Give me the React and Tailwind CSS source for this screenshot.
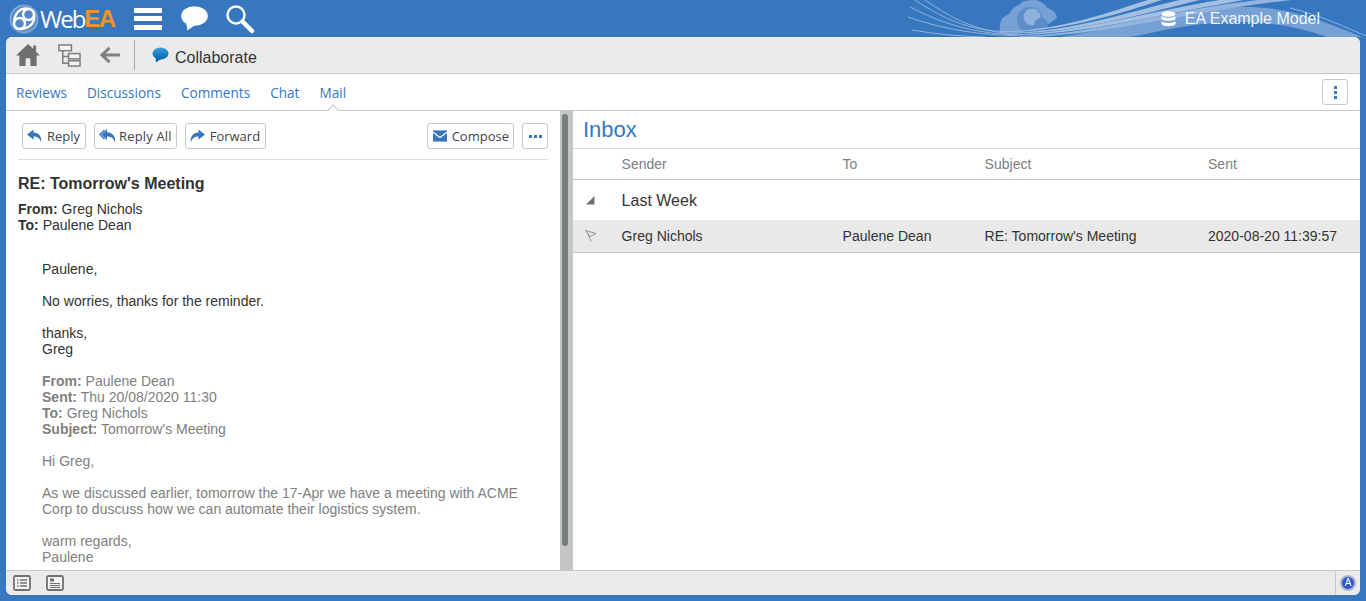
import React from 'react';

const arial = "font-['Liberation_Sans',Arial,sans-serif]";
const open = "font-['Open_Sans',sans-serif]";

function Banner() {
  return (
    <svg className="absolute right-0 top-0" width="466" height="37" viewBox="900 0 466 37" fill="none">
      <path d="M1000 34 C999 24 1001 17 1006 16 L1010 13 C1012 8 1016 6 1019 5 L1022 2 C1026 0 1032 0 1036 0 L1041 2 C1043 3 1046 5 1047 8 C1052 9 1056 12 1057 18 L1040 30 C1020 34 1010 34 1000 34 Z" fill="#77a1d4" />
      <circle cx="1030" cy="20" r="13" fill="#5b8dca" />
      <circle cx="1032" cy="17" r="8.5" fill="#8fb2dc" />
      <circle cx="1041" cy="25" r="7" fill="#5b8dca" />
      <path d="M1060 37 C1120 28 1170 10 1240 7 C1285 6 1320 20 1362 37 L1327 37 C1300 27 1270 22 1240 22 C1190 22 1160 32 1130 37 Z" fill="#77a1d4" />
      <path d="M915 0 C945 20 970 30 1002 31.5 M925 0 C955 21 980 31 1006 33 M910 7 C945 25 975 33 1012 34.5 M908 17 C945 30 980 35 1022 36 M912 30 C935 34 960 36.5 985 37" stroke="#8fb2dc" strokeWidth="1" />
      <path d="M1000 31.5 C1060 31 1110 12 1148 0 L1162 0 C1115 15 1060 32.5 1000 32 Z" fill="#a3c0e3" />
      <path d="M1005 33 C1065 33 1125 13 1180 0 L1200 0 C1135 16 1070 34.5 1005 33.5 Z" fill="#a3c0e3" />
      <path d="M1010 34.5 C1075 34 1150 11 1220 0 L1244 0 C1160 14 1080 36 1010 35 Z" fill="#a3c0e3" />
      <path d="M1020 36 C1090 35 1175 9 1258 0 L1292 0 C1190 11 1100 37 1020 37 Z" fill="#93b5de" />
      <path d="M1290 8 C1320 15 1345 27 1366 36" stroke="#8fb2dc" strokeWidth="1" />
    </svg>
  );
}

function Logo() {
  return (
    <svg width="30" height="30" viewBox="0 0 30 30" fill="none" className="ml-[3px] shrink-0">
      <circle cx="15" cy="15" r="14.5" fill="#7da5d7" />
      <circle cx="15" cy="15" r="12.5" fill="#5488c6" />
      <g stroke="#fff" strokeWidth="2.4" fill="none">
        <circle cx="19.5" cy="10.5" r="5.5" />
        <circle cx="10.5" cy="19.5" r="5.5" />
        <path d="M19.5 5 C12 3 5 8.5 5 19.5" />
        <path d="M25 10.5 C26.5 18 21 25 10.5 25" />
      </g>
    </svg>
  );
}

function Header() {
  return (
    <div className="relative flex h-[37px] shrink-0 items-center overflow-hidden pl-[6px]">
      <Banner />
      <Logo />
      <div className={`ml-[1px] flex h-[37px] items-center text-[24px] leading-[37px] ${open}`}>
        <span className="tracking-[-2px] text-white">Web</span>
        <span className={`tracking-[-1.5px] font-bold text-[#f7941d] ${arial}`}>EA</span>
      </div>
      <div className="ml-[19px] flex h-[24px] w-[28px] shrink-0 flex-col justify-between py-[1px]">
        <div className="h-[5px] bg-white" />
        <div className="h-[5px] bg-white" />
        <div className="h-[5px] bg-white" />
      </div>
      <svg width="27" height="25" viewBox="0 0 27 25" className="ml-[19px] shrink-0">
        <ellipse cx="13.5" cy="10" rx="13.3" ry="9.8" fill="#fff" />
        <path d="M5 16 L6.5 24.5 L14 19 Z" fill="#fff" />
      </svg>
      <svg width="30" height="30" viewBox="0 0 30 30" fill="none" className="ml-[17px] shrink-0">
        <circle cx="11" cy="11" r="8.5" stroke="#fff" strokeWidth="2.4" />
        <path d="M17.5 17.5 L27 27" stroke="#fff" strokeWidth="4.5" strokeLinecap="round" />
      </svg>
      <div className="relative ml-auto mr-[46px] flex items-center">
        <svg width="15" height="16" viewBox="0 0 15 16" className="mr-[9px]">
          <ellipse cx="7.5" cy="3" rx="7" ry="2.8" fill="#fff" />
          <path d="M0.5 5 C2 7.5 13 7.5 14.5 5 V8 C13 10.5 2 10.5 0.5 8 Z" fill="#fff" />
          <path d="M0.5 10 C2 12.5 13 12.5 14.5 10 V13 C13 16 2 16 0.5 13 Z" fill="#fff" />
        </svg>
        <span className={`text-[16px] leading-[20px] text-[#f0f5fb] ${arial}`}>EA Example Model</span>
      </div>
    </div>
  );
}

function Toolbar() {
  return (
    <div className="flex h-[37px] shrink-0 items-center rounded-t-[6px] border-b border-[#c8c8c8] bg-[#ebebeb]">
      <svg width="24" height="22" viewBox="0 0 25 23" className="ml-[10px]">
        <path d="M12.5 0 L18 5 V1.5 H21 V8 L25 12 H21.5 V23 H15 V15 H10 V23 H3.5 V12 H0 Z" fill="#707070" />
      </svg>
      <svg width="23" height="23" viewBox="0 0 24 24" fill="none" className="ml-[18px]" stroke="#808080">
        <rect x="1" y="1" width="13" height="6" strokeWidth="1.6" fill="#f4f4f4" />
        <rect x="11" y="10" width="12" height="5.5" strokeWidth="1.6" fill="#f4f4f4" />
        <rect x="11" y="17.5" width="12" height="5.5" strokeWidth="1.6" fill="#f4f4f4" />
        <path d="M5 7 V20 H11 M5 13 H11" strokeWidth="1.6" />
      </svg>
      <svg width="20" height="18" viewBox="0 0 21 18" fill="none" className="ml-[19px]">
        <path d="M10 1.5 L2 9 L10 16.5 M2 9 H21" stroke="#808080" strokeWidth="3" />
      </svg>
      <div className="ml-[14px] h-[30px] w-px bg-[#a8a8a8]" />
      <svg width="17" height="16" viewBox="0 0 17 16" className="ml-[17px]">
        <defs>
          <linearGradient id="bub" x1="0" y1="0" x2="0" y2="1">
            <stop offset="0" stopColor="#3aa0dc" />
            <stop offset="1" stopColor="#0a67ad" />
          </linearGradient>
        </defs>
        <ellipse cx="8.5" cy="6.5" rx="8" ry="6" fill="url(#bub)" />
        <path d="M3.5 10 L4 15.5 L9 12 Z" fill="#0a67ad" />
      </svg>
      <span className={`ml-[6px] mt-[6px] text-[16px] leading-[20px] text-[#333] ${arial}`}>Collaborate</span>
    </div>
  );
}

function Tabs() {
  const tabs = ['Reviews', 'Discussions', 'Comments', 'Chat', 'Mail'];
  return (
    <div className="relative flex h-[37px] shrink-0 items-center border-b border-[#c8c8c8] bg-white pl-[4px] pr-[12px]">
      <div className={`mt-[2px] flex gap-[8px] text-[13.6px] text-[#3777bf] ${open}`}>
        {tabs.map((t) => (
          <div key={t} className="relative px-[6px] leading-[20px]">
            {t}
            {t === 'Mail' && (
              <div className="absolute left-1/2 top-[23px] h-[8px] w-[8px] -translate-x-1/2 rotate-45 border-l border-t border-[#c8c8c8] bg-white" />
            )}
          </div>
        ))}
      </div>
      <div className="ml-auto flex h-[26px] w-[26px] flex-col items-center justify-center gap-[2px] rounded-[3px] border border-[#c8c8c8]">
        <div className="h-[3px] w-[3px] bg-[#3777bf]" />
        <div className="h-[3px] w-[3px] bg-[#3777bf]" />
        <div className="h-[3px] w-[3px] bg-[#3777bf]" />
      </div>
    </div>
  );
}

function Btn({ icon, label, className = '' }) {
  return (
    <div className={`flex h-[26px] items-center gap-[5px] rounded-[3px] border border-[#c8c8c8] pl-[4px] pr-[5px] text-[13px] text-[#444] ${open} ${className}`}>
      {icon}
      <span>{label}</span>
    </div>
  );
}

const ReplyIcon = (
  <svg width="15" height="14" viewBox="0 0 16 14">
    <path d="M7 0 L0 5.5 L7 11 V7.5 C11 7.5 13.5 9 15 13.5 C16 8 13 3.5 7 3.2 Z" fill="#3777bf" />
  </svg>
);
const ReplyAllIcon = (
  <svg width="17" height="14" viewBox="0 0 17 14">
    <path d="M8 0 L2.5 5.5 L8 11 V7.5 C12 7.5 14.5 9 16 13.5 C17 8 14 3.5 8 3.2 Z" fill="#3777bf" />
    <path d="M5 0.5 L0 5.5 L5 10.5 L6 9.5 L2 5.5 L6 1.5 Z" fill="#3777bf" />
  </svg>
);
const ForwardIcon = (
  <svg width="15" height="14" viewBox="0 0 16 14">
    <path d="M9 0 L16 5.5 L9 11 V7.5 C5 7.5 2.5 9 1 13.5 C0 8 3 3.5 9 3.2 Z" fill="#3777bf" />
  </svg>
);
const MailIcon = (
  <svg width="14" height="12" viewBox="0 0 15 12">
    <rect width="15" height="12" fill="#3777bf" />
    <path d="M0 2 L7.5 7.5 L15 2" fill="none" stroke="#fff" strokeWidth="1.3" />
  </svg>
);

function MailPane() {
  return (
    <div className={`flex min-w-0 flex-1 flex-col overflow-hidden pl-[12px] pr-[12px] text-[14.03px] leading-[16px] text-[#333] ${arial}`}>
      <div className="flex h-[49px] shrink-0 items-start border-b border-[#dcdcdc] pl-[4px] pt-[12px]">
        <Btn icon={ReplyIcon} label="Reply" />
        <Btn icon={ReplyAllIcon} label="Reply All" className="ml-[8px] !gap-[3px] !pr-[4px] tracking-[0.15px]" />
        <Btn icon={ForwardIcon} label="Forward" className="ml-[8px]" />
        <Btn icon={MailIcon} label="Compose" className="ml-auto !pl-[5px] !pr-[4px]" />
        <div className="ml-[8px] flex h-[26px] w-[26px] items-center justify-center gap-[2px] rounded-[3px] border border-[#c8c8c8]">
          <div className="h-[3px] w-[3px] bg-[#3777bf]" />
          <div className="h-[3px] w-[3px] bg-[#3777bf]" />
          <div className="h-[3px] w-[3px] bg-[#3777bf]" />
        </div>
      </div>
      <div className="mt-[14px] text-[16px] font-bold leading-[20px]">RE: Tomorrow's Meeting</div>
      <div className="mt-[7px]"><b>From:</b> Greg Nichols</div>
      <div><b>To:</b> Paulene Dean</div>
      <div className="mt-[28px] pl-[24px]">
        <p>Paulene,</p>
        <p className="mt-[16px]">No worries, thanks for the reminder.</p>
        <p className="mt-[16px]">thanks,<br />Greg</p>
        <div className="mt-[16px] text-[#808080]">
          <p><b>From:</b> Paulene Dean</p>
          <p><b>Sent:</b> Thu 20/08/2020 11:30</p>
          <p><b>To:</b> Greg Nichols</p>
          <p><b>Subject:</b> Tomorrow's Meeting</p>
          <p className="mt-[16px]">Hi Greg,</p>
          <p className="mt-[16px]">As we discussed earlier, tomorrow the 17-Apr we have a meeting with ACME<br />Corp to duscuss how we can automate their logistics system.</p>
          <p className="mt-[16px]">warm regards,<br />Paulene</p>
        </div>
      </div>
    </div>
  );
}

function Scrollbar() {
  return (
    <div className="flex w-[13px] shrink-0 border-r border-[#c8c8c8]">
      <div className="w-[12px] bg-[#c4c6c6] pl-[2px] pt-[3px] pb-[24px]">
        <div className="h-full w-[6px] rounded-[3px] bg-[#7b7e7e]" />
      </div>
    </div>
  );
}

function Row({ children, className = '' }) {
  return <div className={`grid grid-cols-[48.6px_221px_142px_223.4px_1fr] items-center ${className}`}>{children}</div>;
}

function Inbox() {
  return (
    <div className={`flex w-[787px] min-w-0 shrink-0 flex-col text-[14.03px] text-[#333] ${arial}`}>
      <div className="flex h-[38px] shrink-0 items-center border-b border-[#dcdcdc] pl-[10px] text-[22px] text-[#3777bf]">Inbox</div>
      <Row className="h-[31px] shrink-0 border-b border-[#c8c8c8] pt-[2px] text-[#808080]">
        <div />
        <div>Sender</div>
        <div>To</div>
        <div>Subject</div>
        <div>Sent</div>
      </Row>
      <Row className="h-[40px] shrink-0 pt-[2px] text-[16px]">
        <div className="flex pb-[2px] pl-[12px]">
          <svg width="10" height="10" viewBox="0 0 10 10"><path d="M9.5 1 V9.5 H1 Z" fill="#707070" /></svg>
        </div>
        <div>Last Week</div>
      </Row>
      <Row className="h-[33px] shrink-0 border-b border-[#c8c8c8] bg-[#e9e9e9] pt-[2px]">
        <div className="flex pb-[2px] pl-[12px]">
          <svg width="12" height="12" viewBox="0 0 12 12" fill="none">
            <path d="M0.5 0.5 L11 3.5 L5 6.5 Z M2.5 2.5 L6 11.5" stroke="#808080" strokeWidth="0.8" />
          </svg>
        </div>
        <div>Greg Nichols</div>
        <div>Paulene Dean</div>
        <div>RE: Tomorrow's Meeting</div>
        <div>2020-08-20 11:39:57</div>
      </Row>
    </div>
  );
}

function Footer() {
  return (
    <div className="flex h-[25px] shrink-0 items-center rounded-b-[6px] border-t border-[#c8c8c8] bg-[#ebebeb]">
      <svg width="18" height="16" viewBox="0 0 18 16" fill="none" className="ml-[7px]">
        <rect x="1" y="1" width="16" height="14" rx="1.5" stroke="#707070" strokeWidth="1.8" fill="#f4f4f4" />
        <path d="M4 5 H5.5 M7 5 H14 M4 8 H5.5 M7 8 H14 M4 11 H5.5 M7 11 H14" stroke="#707070" strokeWidth="1.5" />
      </svg>
      <svg width="18" height="16" viewBox="0 0 18 16" fill="none" className="ml-[15px]">
        <rect x="1" y="1" width="16" height="14" rx="1.5" stroke="#707070" strokeWidth="1.8" fill="#f4f4f4" />
        <path d="M4 3.5 H8 V6.5 H4 Z" fill="#707070" />
        <path d="M4 8.5 H14 M4 10.5 H14 M4 12.5 H14" stroke="#707070" strokeWidth="1.1" />
      </svg>
      <div className="ml-auto flex h-full w-[25px] items-center justify-center border-l border-[#c8c8c8]">
        <div className={`flex h-[16px] w-[16px] items-center justify-center rounded-full border-2 border-[#a9b4cc] bg-[#2b57c8] text-[10px] leading-none text-white ${arial}`}>A</div>
      </div>
    </div>
  );
}

export default function App() {
  return (
    <div className="flex h-[601px] w-[1366px] flex-col overflow-hidden bg-[#3777bf]">
      <Header />
      <div className="mx-[6px] mb-[6px] flex min-h-0 flex-1 flex-col rounded-[6px] bg-white">
        <Toolbar />
        <Tabs />
        <div className="flex min-h-0 flex-1">
          <MailPane />
          <Scrollbar />
          <Inbox />
        </div>
        <Footer />
      </div>
    </div>
  );
}
